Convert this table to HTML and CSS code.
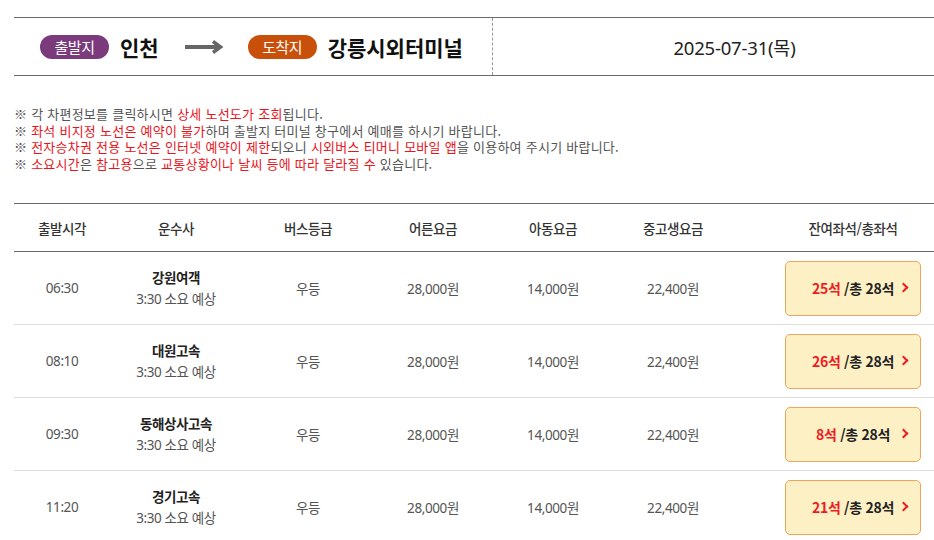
FILE: index.html
```html
<!DOCTYPE html>
<html lang="ko">
<head>
<meta charset="utf-8">
<link rel="stylesheet" href="styles.css">
</head>
<body>
<div class="page">
  <div class="route">
    <div class="route-left">
      <span class="badge badge-dep">출발지</span>
      <span class="place">인천</span>
      <svg class="arrow" width="40" height="14" viewBox="0 0 40 14"><path d="M1 7 H36" stroke="#666" stroke-width="4" fill="none"/><path d="M29 1.5 L36.5 7 L29 12.5" stroke="#666" stroke-width="3.5" fill="none" stroke-linejoin="miter"/></svg>
      <span class="badge badge-arr">도착지</span>
      <span class="place">강릉시외터미널</span>
    </div>
    <div class="route-right">2025-07-31(목)</div>
  </div>

  <ul class="notice">
    <li>※ 각 차편정보를 클릭하시면 <em>상세 노선도가 조회</em>됩니다.</li>
    <li>※ <em>좌석 비지정 노선은 예약이 불가</em>하며 출발지 터미널 창구에서 예매를 하시기 바랍니다.</li>
    <li>※ <em>전자승차권 전용 노선은 인터넷 예약이 제한</em>되오니 <em>시외버스 티머니 모바일 앱</em>을 이용하여 주시기 바랍니다.</li>
    <li>※ <em>소요시간</em>은 <em>참고용</em>으로 <em>교통상황이나 날씨 등에 따라 달라질 수</em> 있습니다.</li>
  </ul>

  <div class="table">
    <div class="row head">
      <div class="cell">출발시각</div>
      <div class="cell">운수사</div>
      <div class="cell">버스등급</div>
      <div class="cell">어른요금</div>
      <div class="cell">아동요금</div>
      <div class="cell">중고생요금</div>
      <div class="cell seat-col">잔여좌석/총좌석</div>
    </div>
    <div class="row">
      <div class="cell">06:30</div>
      <div class="cell company"><strong>강원여객</strong><span>3:30 소요 예상</span></div>
      <div class="cell">우등</div>
      <div class="cell">28,000원</div>
      <div class="cell">14,000원</div>
      <div class="cell">22,400원</div>
      <div class="cell seat-col"><a class="seat-btn"><span class="remain">25석</span> /총 28석<i class="chev"></i></a></div>
    </div>
    <div class="row">
      <div class="cell">08:10</div>
      <div class="cell company"><strong>대원고속</strong><span>3:30 소요 예상</span></div>
      <div class="cell">우등</div>
      <div class="cell">28,000원</div>
      <div class="cell">14,000원</div>
      <div class="cell">22,400원</div>
      <div class="cell seat-col"><a class="seat-btn"><span class="remain">26석</span> /총 28석<i class="chev"></i></a></div>
    </div>
    <div class="row">
      <div class="cell">09:30</div>
      <div class="cell company"><strong>동해상사고속</strong><span>3:30 소요 예상</span></div>
      <div class="cell">우등</div>
      <div class="cell">28,000원</div>
      <div class="cell">14,000원</div>
      <div class="cell">22,400원</div>
      <div class="cell seat-col"><a class="seat-btn"><span class="remain">8석</span> /총 28석<i class="chev"></i></a></div>
    </div>
    <div class="row">
      <div class="cell">11:20</div>
      <div class="cell company"><strong>경기고속</strong><span>3:30 소요 예상</span></div>
      <div class="cell">우등</div>
      <div class="cell">28,000원</div>
      <div class="cell">14,000원</div>
      <div class="cell">22,400원</div>
      <div class="cell seat-col"><a class="seat-btn"><span class="remain">21석</span> /총 28석<i class="chev"></i></a></div>
    </div>
  </div>
</div>
</body>
</html>
```

FILE: styles.css
```css
* { box-sizing: border-box; }
html, body { margin: 0; padding: 0; background: #fff; }
body {
  font-family: "Noto Sans", "Noto Sans CJK KR", sans-serif;
  color: #333;
  overflow: hidden;
}
.page {
  padding: 17px 0 0 14px;
  width: 934px;
}
.route {
  display: flex;
  height: 59px;
  border-top: 1px solid #6b6b6b;
  border-bottom: 1px solid #6b6b6b;
}
.route-left {
  width: 479px;
  display: flex;
  align-items: center;
  padding-left: 26px;
  border-right: 1px dashed #999;
}
.route-right {
  flex: 1;
  display: flex;
  align-items: center;
  justify-content: center;
  padding-left: 42px;
  font-size: 18.5px;
  color: #222;
  letter-spacing: -0.2px;
}
.badge {
  display: inline-flex;
  align-items: center;
  justify-content: center;
  width: 69px;
  height: 24px;
  border-radius: 12px;
  color: #fff;
  font-family: "Noto Sans CJK KR", sans-serif;
  font-size: 15px;
  letter-spacing: -0.5px;
}
.badge-dep { background: #7a3a7c; }
.badge-arr { background: #c9500a; }
.place {
  font-family: "Noto Sans CJK KR", sans-serif;
  font-weight: 700;
  font-size: 21px;
  color: #111;
  margin-left: 11px;
  letter-spacing: 0;
}
.arrow { margin: 0 24px 0 25px; }
.notice {
  list-style: none;
  margin: 0;
  padding: 30px 0 0 0;
  font-family: "Noto Sans CJK KR", sans-serif;
  font-size: 13px;
  line-height: 16.7px;
  color: #555;
  letter-spacing: 0.25px;
  height: 127px;
}
.notice em { font-style: normal; color: #e8141b; }
.table {
  width: 920px;
  border-top: 1px solid #6b6b6b;
}
.row {
  display: grid;
  grid-template-columns: 96px 132px 132px 118px 122px 118px 202px;
  height: 73px;
  border-bottom: 1px solid #ddd;
  align-items: center;
  font-size: 13.5px;
  color: #555;
}
.row.head {
  height: 48px;
  border-bottom: 1px solid #6b6b6b;
  font-family: "Noto Sans CJK KR", sans-serif;
  font-weight: 500;
  font-size: 13.5px;
  color: #333;
  letter-spacing: -0.6px;
}
.cell {
  text-align: center;
  font-family: "Noto Sans", "Noto Sans CJK KR", sans-serif;
  letter-spacing: -0.4px;
}
.head .cell { font-family: "Noto Sans CJK KR", sans-serif; }
.seat-col { padding-left: 40px; display: flex; justify-content: center; }
.company {
  display: flex;
  flex-direction: column;
  line-height: 22px;
}
.company strong { color: #222; font-weight: 700; font-family: "Noto Sans CJK KR", sans-serif; }
.company span { color: #555; }
.seat-btn {
  position: relative;
  display: flex;
  align-items: center;
  justify-content: center;
  width: 136px;
  height: 55px;
  background: #fdf0c5;
  border: 1px solid #f0a55c;
  border-radius: 5px;
  font-family: "Noto Sans CJK KR", sans-serif;
  font-weight: 700;
  font-size: 14px;
  color: #222;
  letter-spacing: -0.3px;
  white-space: pre;
}
.remain { color: #ec1c24; }
.chev {
  position: absolute;
  right: 13px;
  top: 50%;
  width: 7px;
  height: 7px;
  margin-top: -4px;
  border-top: 2px solid #ec1c24;
  border-right: 2px solid #ec1c24;
  transform: rotate(45deg);
}
```
